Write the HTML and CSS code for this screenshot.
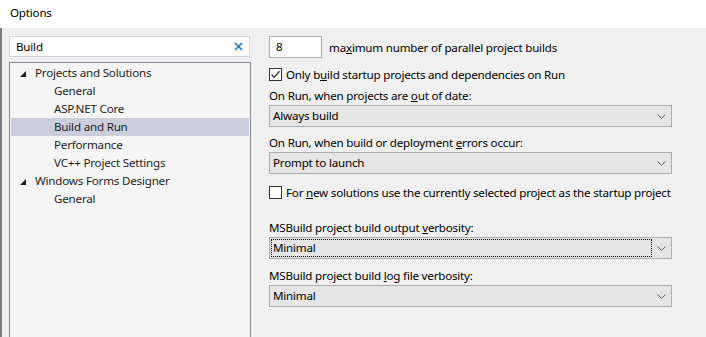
FILE: index.html
```html
<!DOCTYPE html>
<html lang="en">
<head>
    <meta charset="UTF-8">
    <title>Options</title>
    <link rel="stylesheet" href="styles.css">
</head>
<body>
    <div class="window">
        <div class="titlebar">Options</div>

        <div class="content">
            <div class="nav">
                <div class="search">
                    <span class="search-text">Build</span>
                    <svg class="search-clear" width="9" height="9" viewBox="0 0 9 9">
                        <path d="M1 1 L8 8 M8 1 L1 8" stroke="#1e73c8" stroke-width="1.6"/>
                    </svg>
                </div>

                <div class="tree">
                    <div class="tree-item parent">
                        <svg class="expander" width="6" height="6" viewBox="0 0 6 6"><polygon points="6,0 6,6 0,6" fill="#1e1e1e"/></svg>
                        Projects and Solutions
                    </div>
                    <div class="tree-item child">General</div>
                    <div class="tree-item child">ASP.NET Core</div>
                    <div class="tree-item child selected">Build and Run</div>
                    <div class="tree-item child">Performance</div>
                    <div class="tree-item child">VC++ Project Settings</div>
                    <div class="tree-item parent">
                        <svg class="expander" width="6" height="6" viewBox="0 0 6 6"><polygon points="6,0 6,6 0,6" fill="#1e1e1e"/></svg>
                        Windows Forms Designer
                    </div>
                    <div class="tree-item child">General</div>
                </div>
            </div>

            <div class="settings">
                <div class="number-row">
                    <div class="number-box">8</div>
                    <span>ma<u>x</u>imum number of parallel project builds</span>
                </div>

                <div class="check-row first-check">
                    <span class="checkbox">
                        <svg width="11" height="11" viewBox="0 0 11 11"><path d="M1.5 5.5 L4.2 8.3 L9.6 2.2" fill="none" stroke="#333" stroke-width="1.3"/></svg>
                    </span>
                    <span>Only b<u>u</u>ild startup projects and dependencies on Run</span>
                </div>

                <div class="field-label gap-small">On Run, when projects are <u>o</u>ut of date:</div>
                <div class="select">
                    <span class="select-value">Always build</span>
                    <span class="chevron"><svg width="9" height="5" viewBox="0 0 9 5"><path d="M0.5 0.5 L4.5 4.3 L8.5 0.5" fill="none" stroke="#555" stroke-width="1"/></svg></span>
                </div>

                <div class="field-label gap-mid">On Run, when build or deployment <u>e</u>rrors occur:</div>
                <div class="select">
                    <span class="select-value">Prompt to launch</span>
                    <span class="chevron"><svg width="9" height="5" viewBox="0 0 9 5"><path d="M0.5 0.5 L4.5 4.3 L8.5 0.5" fill="none" stroke="#555" stroke-width="1"/></svg></span>
                </div>

                <div class="check-row gap-check">
                    <span class="checkbox"></span>
                    <span>For <u>n</u>ew solutions use the currently selected project as the startup project</span>
                </div>

                <div class="field-label gap-large">MSBuild project build output <u>v</u>erbosity:</div>
                <div class="select">
                    <span class="select-value focused">Minimal</span>
                    <span class="chevron"><svg width="9" height="5" viewBox="0 0 9 5"><path d="M0.5 0.5 L4.5 4.3 L8.5 0.5" fill="none" stroke="#555" stroke-width="1"/></svg></span>
                </div>

                <div class="field-label gap-last">MSBuild project build <u>l</u>og file verbosity:</div>
                <div class="select">
                    <span class="select-value">Minimal</span>
                    <span class="chevron"><svg width="9" height="5" viewBox="0 0 9 5"><path d="M0.5 0.5 L4.5 4.3 L8.5 0.5" fill="none" stroke="#555" stroke-width="1"/></svg></span>
                </div>
            </div>
        </div>
    </div>
</body>
</html>
```

FILE: styles.css
```css
:root {
    --window-bg: #f0f0f0;
    --tree-bg: #f5f5f5;
    --tree-border: #828790;
    --select-bg: #e5e5e5;
    --select-border: #acacac;
    --selected-row: #cccedb;
    --text: #000;
}

* {
    box-sizing: border-box;
    margin: 0;
    padding: 0;
}

html, body {
    height: 100%;
    overflow: hidden;
}

body {
    font-family: "Noto Sans", "Open Sans", sans-serif;
    font-size: 11.6px;
    letter-spacing: -0.2px;
    color: var(--text);
    background: var(--window-bg);
}

.window {
    height: 100%;
    display: flex;
    flex-direction: column;
}

.titlebar {
    height: 28px;
    line-height: 26px;
    padding-left: 10px;
    background: #fff;
    flex-shrink: 0;
}

.content {
    flex: 1;
    display: flex;
    gap: 18px;
    padding: 8px 0 0 9px;
    border-left: 2px solid #7a7a7a;
    overflow: hidden;
}

/* left navigation */
.nav {
    width: 242px;
    display: flex;
    flex-direction: column;
    margin-left: -2px;
}

.search {
    height: 21px;
    background: #fff;
    border: 1px solid #d0d5de;
    display: flex;
    align-items: center;
    padding: 0 6px;
    margin-right: 1px;
}

.search-text {
    flex: 1;
    line-height: 19px;
}

.search-clear {
    display: block;
}

.tree {
    flex: 1;
    margin-top: 5px;
    background: var(--tree-bg);
    border: 1px solid var(--tree-border);
    border-bottom: none;
    padding: 1px 1px 0 1px;
}

.tree-item {
    height: 18px;
    line-height: 18px;
    color: #1e1e1e;
    white-space: nowrap;
}

.tree-item.parent {
    padding-left: 9px;
    display: flex;
    align-items: center;
}

.expander {
    display: block;
    margin-right: 9px;
    margin-top: 1px;
}

.tree-item.child {
    padding-left: 43px;
}

.tree-item.selected {
    background: var(--selected-row);
}

/* right settings */
.settings {
    width: 403px;
    display: flex;
    flex-direction: column;
}

.number-row {
    display: flex;
    align-items: center;
    gap: 7px;
    height: 22px;
}

.number-box {
    width: 53px;
    height: 22px;
    background: #fff;
    border: 1px solid var(--select-border);
    padding-left: 6px;
    line-height: 19px;
}

.check-row {
    display: flex;
    align-items: center;
    gap: 4px;
    height: 16px;
    white-space: nowrap;
}

.first-check {
    margin-top: 8px;
}

.checkbox {
    width: 13px;
    height: 13px;
    background: #fff;
    border: 1px solid #333;
    display: flex;
    align-items: center;
    justify-content: center;
    flex-shrink: 0;
}

.checkbox svg {
    display: block;
}

.field-label {
    height: 16px;
    line-height: 16px;
    margin-bottom: 1px;
    white-space: nowrap;
}

.gap-small {
    margin-top: 6px;
}

.gap-mid {
    margin-top: 8px;
}

.gap-check {
    margin-top: 10px;
}

.gap-large {
    margin-top: 20px;
}

.gap-last {
    margin-top: 9px;
}

.select {
    height: 22px;
    background: var(--select-bg);
    border: 1px solid var(--select-border);
    display: flex;
    align-items: stretch;
    padding: 1px;
}

.select-value {
    flex: 1;
    padding-left: 2px;
    line-height: 18px;
}

.select-value.focused {
    outline: 1px dotted #000;
    outline-offset: -1px;
    margin-right: 1px;
}

.chevron {
    width: 16px;
    display: flex;
    align-items: center;
    justify-content: center;
    margin-right: 1px;
}

.chevron svg {
    display: block;
}
```
